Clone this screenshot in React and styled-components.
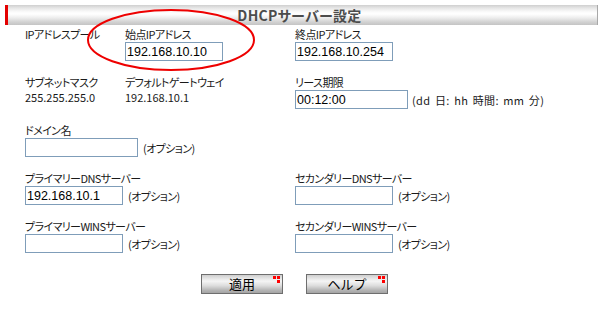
import React from "react";
import styled, { createGlobalStyle } from "styled-components";

const Global = createGlobalStyle`
  html, body { margin: 0; padding: 0; background: #fff; }
  body { font-family: "Noto Sans CJK JP", "Liberation Sans", sans-serif; }
`;

const Page = styled.div`
  position: relative;
  width: 603px;
  height: 309px;
  padding-top: 5px;
  box-sizing: border-box;
`;

const Header = styled.div`
  margin: 0 5px;
  height: 20px;
  box-sizing: border-box;
  border-left: 3px solid #e40000;
  border-right: 1px solid #a8a8a8;
  padding-right: 6px;
  background: linear-gradient(
    to bottom,
    #cfcfcf 0%,
    #e6e6e6 15%,
    #fbfbfb 35%,
    #ffffff 45%,
    #ececec 65%,
    #d2d2d2 85%,
    #c4c4c4 100%
  );
  display: flex;
  align-items: center;
  justify-content: center;
`;

const Title = styled.span`
  font-size: 14px;
  font-weight: 700;
  color: #4c4c4c;
  line-height: 20px;
  font-feature-settings: "palt";
  letter-spacing: 0.3px;
`;

const Form = styled.div`
  display: grid;
  grid-template-columns: 100px 170px 1fr;
  row-gap: 14px;
  padding: 2px 0 0 25px;
`;

const Field = styled.div`
  grid-column: ${(p) => p.$span || "auto"};
  display: flex;
  flex-direction: column;
`;

const Label = styled.div`
  font-size: 11px;
  line-height: 15px;
  height: 15px;
  color: #1a1a1a;
  font-feature-settings: "palt";
  letter-spacing: -0.6px;
  white-space: nowrap;
`;

const Control = styled.div`
  display: flex;
  align-items: center;
  height: 19px;
  gap: ${(p) => p.$gap || 5}px;
`;

const Value = styled.span`
  font-size: 11px;
  color: #1a1a1a;
  line-height: 15px;
  margin-top: -5px;
`;

const Input = styled.input`
  width: ${(p) => p.$w}px;
  height: 19px;
  box-sizing: border-box;
  border: 1px solid #7f9db9;
  padding: 0 1px;
  margin: 0;
  font-family: "Liberation Sans", Arial, sans-serif;
  font-size: 12.5px;
  color: #000;
  background: #fff;
  outline: none;
`;

const Hint = styled.span`
  font-size: 11px;
  color: #1a1a1a;
  font-feature-settings: "palt";
  letter-spacing: ${(p) => (p.$wide ? "0.4px" : "-0.6px")};
  word-spacing: ${(p) => (p.$wide ? "1.5px" : "0")};
  white-space: nowrap;
`;

const Buttons = styled.div`
  display: flex;
  gap: 23px;
  margin-top: 21px;
  padding-left: 201px;
`;

const Button = styled.button`
  position: relative;
  width: 82px;
  height: 20px;
  box-sizing: border-box;
  border: 1px solid #6e6e6e;
  padding: 0;
  background: linear-gradient(
    to bottom,
    #cfcfcf 0%,
    #ececec 25%,
    #f4f4f4 35%,
    #dcdcdc 60%,
    #b4b4b4 85%,
    #a4a4a4 100%
  );
  font-family: "Noto Sans CJK JP", sans-serif;
  font-size: 13px;
  color: #000;
  line-height: 18px;
  cursor: pointer;
`;

const Corner = styled.svg`
  position: absolute;
  top: 1px;
  right: 2px;
`;

const Ring = styled.svg`
  position: absolute;
  left: 0;
  top: 0;
  pointer-events: none;
`;

function Btn({ children }) {
  return (
    <Button>
      {children}
      <Corner width="7" height="7" viewBox="0 0 7 7">
        <rect x="0" y="0" width="3" height="3" fill="#ff0000" />
        <rect x="4" y="0" width="3" height="3" fill="#ff0000" />
        <rect x="4" y="4" width="3" height="3" fill="#ff0000" />
      </Corner>
    </Button>
  );
}

export default function App() {
  return (
    <>
      <Global />
      <Page>
        <Header>
          <Title>DHCPサーバー設定</Title>
        </Header>
        <Form>
          <Field>
            <Label>IPアドレスプール</Label>
          </Field>
          <Field>
            <Label>始点IPアドレス</Label>
            <Control>
              <Input $w={98} defaultValue="192.168.10.10" />
            </Control>
          </Field>
          <Field>
            <Label>終点IPアドレス</Label>
            <Control>
              <Input $w={98} defaultValue="192.168.10.254" />
            </Control>
          </Field>

          <Field>
            <Label>サブネットマスク</Label>
            <Control>
              <Value>255.255.255.0</Value>
            </Control>
          </Field>
          <Field>
            <Label>デフォルトゲートウェイ</Label>
            <Control>
              <Value>192.168.10.1</Value>
            </Control>
          </Field>
          <Field>
            <Label>リース期限</Label>
            <Control $gap={4}>
              <Input $w={113} defaultValue="00:12:00" />
              <Hint $wide>(dd 日: hh 時間: mm 分)</Hint>
            </Control>
          </Field>

          <Field $span="1 / span 3">
            <Label>ドメイン名</Label>
            <Control>
              <Input $w={113} defaultValue="" />
              <Hint>(オプション)</Hint>
            </Control>
          </Field>

          <Field $span="1 / span 2">
            <Label>プライマリーDNSサーバー</Label>
            <Control>
              <Input $w={98} defaultValue="192.168.10.1" />
              <Hint>(オプション)</Hint>
            </Control>
          </Field>
          <Field>
            <Label>セカンダリーDNSサーバー</Label>
            <Control>
              <Input $w={98} defaultValue="" />
              <Hint>(オプション)</Hint>
            </Control>
          </Field>

          <Field $span="1 / span 2">
            <Label>プライマリーWINSサーバー</Label>
            <Control>
              <Input $w={98} defaultValue="" />
              <Hint>(オプション)</Hint>
            </Control>
          </Field>
          <Field>
            <Label>セカンダリーWINSサーバー</Label>
            <Control>
              <Input $w={98} defaultValue="" />
              <Hint>(オプション)</Hint>
            </Control>
          </Field>
        </Form>
        <Buttons>
          <Btn>適用</Btn>
          <Btn>ヘルプ</Btn>
        </Buttons>
        <Ring width="603" height="309" viewBox="0 0 603 309">
          <ellipse cx="171" cy="40" rx="83" ry="30" fill="none" stroke="#ee0000" strokeWidth="2" />
        </Ring>
      </Page>
    </>
  );
}
